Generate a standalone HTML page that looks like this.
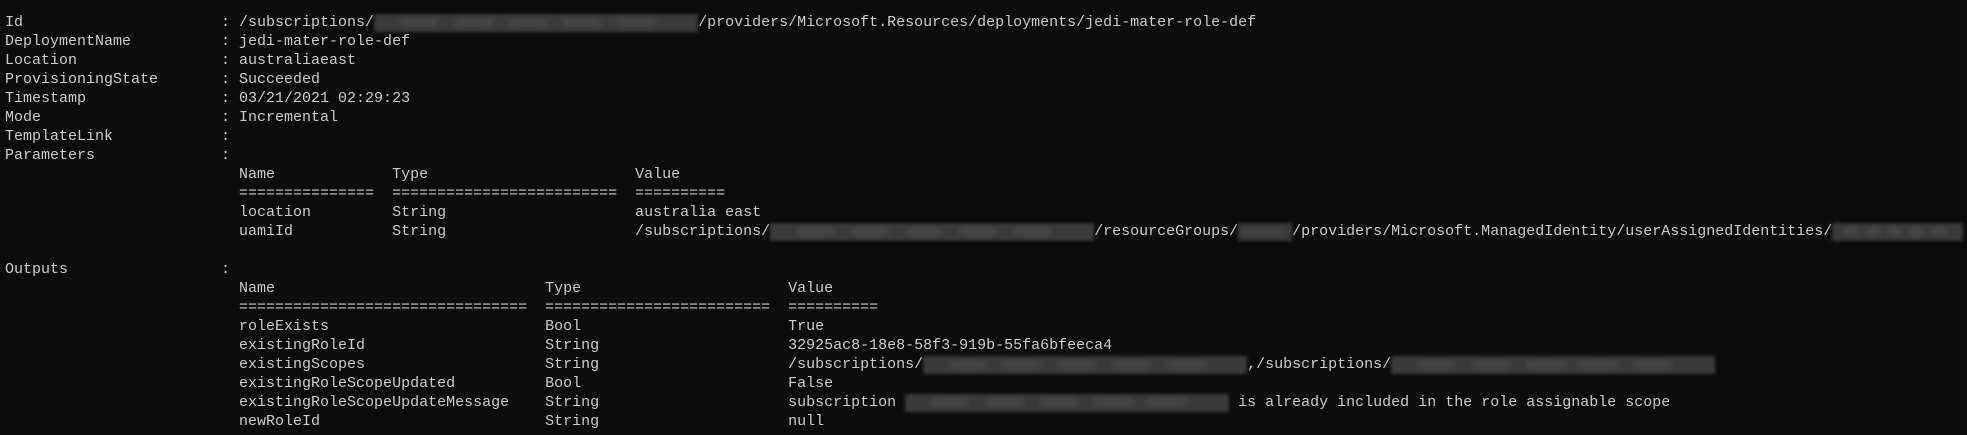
<!DOCTYPE html>
<html><head><meta charset="utf-8"><style>
html,body{margin:0;padding:0;background:#0c0c0c;width:1967px;height:435px;overflow:hidden}
pre{margin:0;position:absolute;left:5px;top:13px;font-family:"Liberation Mono",monospace;font-size:15px;line-height:19px;color:#cccccc;white-space:pre}
.b{display:inline-block;vertical-align:top;height:19px;position:relative}
.b::before{content:"";position:absolute;left:0;right:0;top:1px;bottom:0;background:#3a3a3a;filter:blur(1.5px)}
.b::after{content:"";position:absolute;left:8%;right:8%;top:6px;height:7px;background:repeating-linear-gradient(90deg,#505050 0 14%,transparent 14% 20%);filter:blur(3px);opacity:.6}
</style></head><body><pre>Id                      : /subscriptions/<span class="b" style="width:324px"></span>/providers/Microsoft.Resources/deployments/jedi-mater-role-def
DeploymentName          : jedi-mater-role-def
Location                : australiaeast
ProvisioningState       : Succeeded
Timestamp               : 03/21/2021 02:29:23
Mode                    : Incremental
TemplateLink            :
Parameters              :
                          Name             Type                       Value
                          ===============  =========================  ==========
                          location         String                     australia east
                          uamiId           String                     /subscriptions/<span class="b" style="width:324px"></span>/resourceGroups/<span class="b" style="width:54px"></span>/providers/Microsoft.ManagedIdentity/userAssignedIdentities/<span class="b" style="width:131px"></span>

Outputs                 :
                          Name                              Type                       Value
                          ================================  =========================  ==========
                          roleExists                        Bool                       True
                          existingRoleId                    String                     32925ac8-18e8-58f3-919b-55fa6bfeeca4
                          existingScopes                    String                     /subscriptions/<span class="b" style="width:324px"></span>,/subscriptions/<span class="b" style="width:324px"></span>
                          existingRoleScopeUpdated          Bool                       False
                          existingRoleScopeUpdateMessage    String                     subscription <span class="b" style="width:324px"></span> is already included in the role assignable scope
                          newRoleId                         String                     null
</pre></body></html>
